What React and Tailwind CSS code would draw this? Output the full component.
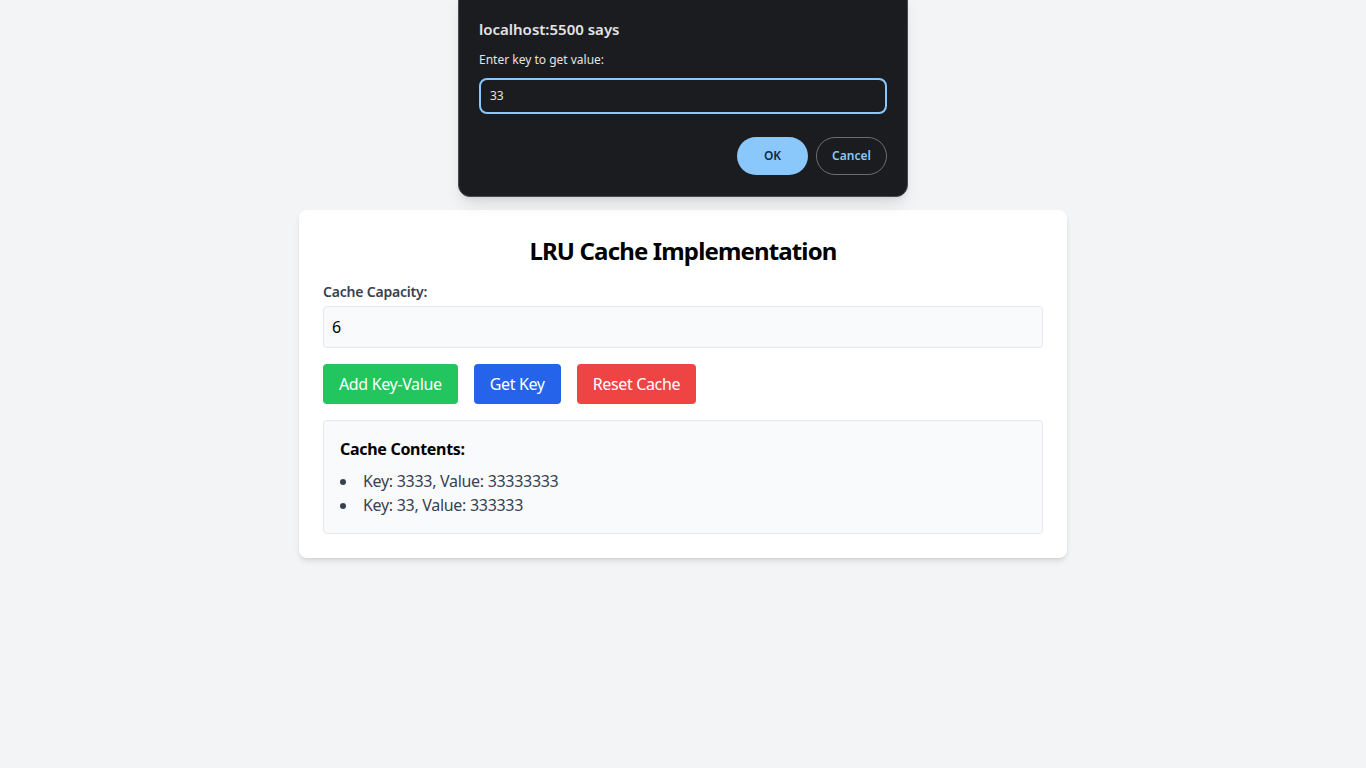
export default function App() {
  const items = [
    { k: "3333", v: "33333333" },
    { k: "33", v: "333333" },
  ];
  return (
    <div className="relative min-h-screen bg-[#f3f4f6] flex items-center justify-center" style={{ fontFamily: '"Noto Sans", "Open Sans", sans-serif' }}>
      <div className="w-[768px] bg-white rounded-lg shadow-md p-6">
        <h1 className="text-2xl font-bold text-center mb-4 text-black tracking-[-0.85px] pt-[2px] leading-[30px]">LRU Cache Implementation</h1>
        <label className="block text-sm font-semibold text-[#374151] tracking-[-0.2px]">Cache Capacity:</label>
        <input
          readOnly
          value="6"
          className="mt-1 w-full p-2 text-base border border-[#e5e7eb] bg-[#f9fafb] rounded text-black outline-none"
        />
        <div className="flex gap-4 mt-4 tracking-[-0.35px]">
          <button className="px-4 py-2 bg-[#22c55e] text-white rounded text-base">Add Key-Value</button>
          <button className="px-4 py-2 bg-[#2563eb] text-white rounded text-base">Get Key</button>
          <button className="px-4 py-2 bg-[#ef4444] text-white rounded text-base">Reset Cache</button>
        </div>
        <div className="mt-4 p-4 border border-[#e5e7eb] bg-[#f9fafb] rounded">
          <h2 className="font-bold text-base mb-2 text-black tracking-[-0.3px]">Cache Contents:</h2>
          <ul className="list-disc list-inside text-[#374151] tracking-[-0.3px]">
            {items.map((it) => (
              <li key={it.k}>Key: {it.k}, Value: {it.v}</li>
            ))}
          </ul>
        </div>
      </div>

      <div className="absolute left-[458px] top-[-12px] w-[450px] pt-[30px] pb-[21px] px-[20px] bg-[#1b1c20] border border-[#4a4b4f] rounded-xl shadow-lg text-[#e3e3e3]">
        <div className="text-[15px] font-semibold leading-5">localhost:5500 says</div>
        <div className="text-[12px] mt-[13px] leading-4">Enter key to get value:</div>
        <div className="mt-[10px] h-[36px] border-2 border-[#8ac7fa] rounded-lg flex items-center px-[9px] text-[12px]">33</div>
        <div className="flex justify-end gap-2 mt-[23px]">
          <button className="w-[71px] h-[38px] rounded-full bg-[#8ac7fa] text-[#0f2a40] text-[12px] font-semibold">OK</button>
          <button className="w-[71px] h-[38px] rounded-full border border-[#6b6e73] text-[#8ac7fa] text-[12px] font-semibold">Cancel</button>
        </div>
      </div>
    </div>
  );
}
